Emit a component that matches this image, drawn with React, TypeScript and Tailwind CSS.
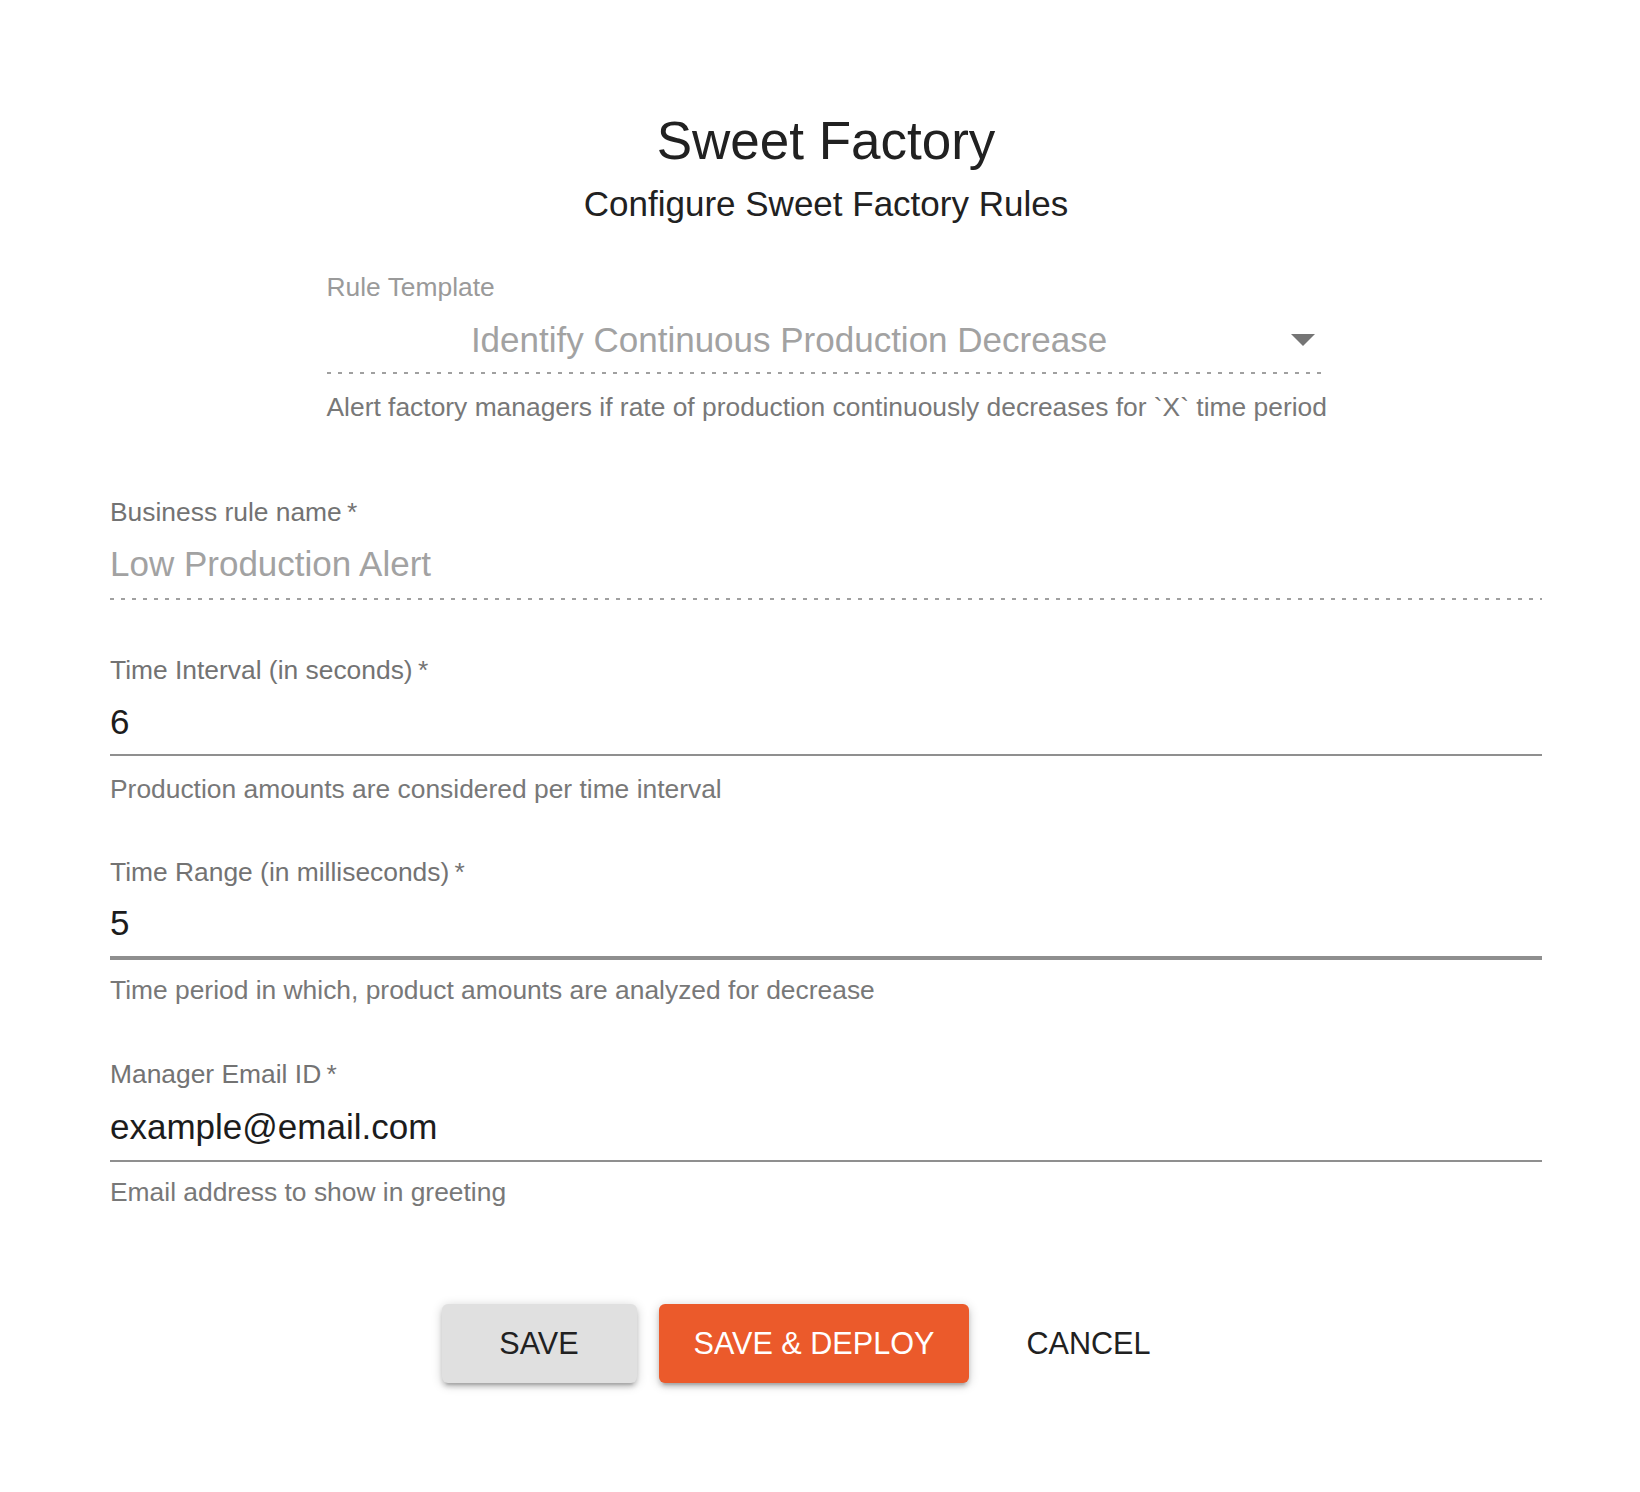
import React from 'react';

// small building blocks for the form fields
const Label: React.FC<{ text: string; required?: boolean; muted?: boolean; className?: string }> = ({
  text,
  required,
  muted,
  className = '',
}) => (
  <label className={`block text-[26.4px] leading-[30px] ${muted ? 'text-[#9a9a9a]' : 'text-[#737373]'} ${className}`}>
    {text}
    {required && '\u2009*'}
  </label>
);

const Value: React.FC<{ text: string; disabled?: boolean; className?: string }> = ({ text, disabled, className = '' }) => (
  <div className={`text-[35px] leading-[44px] ${disabled ? 'text-[#a2a2a2]' : 'text-[#1c1c1c]'} ${className}`}>{text}</div>
);

const Dotted: React.FC<{ className?: string }> = ({ className = '' }) => (
  <div
    className={`h-[2px] bg-[linear-gradient(to_right,#a0a0a0_36%,transparent_0%)] bg-[length:11px_2px] bg-repeat-x ${className}`}
  />
);

const Helper: React.FC<{ text: string; className?: string }> = ({ text, className = '' }) => (
  <p className={`whitespace-nowrap text-[26.4px] leading-[30px] text-[#787878] ${className}`}>{text}</p>
);

const App: React.FC = () => {
  return (
    <div className="min-h-[1492px] bg-white pl-[110px] pr-[98px] pt-[111px] font-['Liberation_Sans',Arial,Helvetica,sans-serif]">
      <h1 className="text-center text-[53px] leading-[60px] text-[#212121]">Sweet Factory</h1>
      <h2 className="mt-[11px] text-center text-[35px] leading-[44px] text-[#212121]">Configure Sweet Factory Rules</h2>

      {/* Rule template select (disabled) */}
      <div className="mx-auto mt-[46px] w-[999px]">
        <Label text="Rule Template" muted />
        <div className="relative mt-[16px]">
          <Value text="Identify Continuous Production Decrease" disabled className="pr-[74px] text-center" />
          <svg
            className="absolute right-[11px] top-1/2 -translate-y-1/2"
            width="24"
            height="12"
            viewBox="0 0 24 12"
          >
            <path d="M0 0 L24 0 L12 12 Z" fill="#757575" />
          </svg>
        </div>
        <Dotted className="mt-[10px]" />
        <Helper
          className="mt-[18px]"
          text="Alert factory managers if rate of production continuously decreases for `X` time period"
        />
      </div>

      {/* Business rule name */}
      <div className="mt-[75px]">
        <Label text="Business rule name" required />
        <Value text="Low Production Alert" disabled className="mt-[15px]" />
        <Dotted className="mt-[12px]" />
      </div>

      {/* Time interval */}
      <div className="mt-[55px]">
        <Label text="Time Interval (in seconds)" required />
        <Value text="6" className="mt-[15px]" />
        <div className="mt-[10px] h-[2px] bg-[#8f8f8f]" />
        <Helper className="mt-[18px]" text="Production amounts are considered per time interval" />
      </div>

      {/* Time range */}
      <div className="mt-[53px]">
        <Label text="Time Range (in milliseconds)" required />
        <Value text="5" className="mt-[14px]" />
        <div className="mt-[11px] h-[4px] bg-[#8f8f8f]" />
        <Helper className="mt-[15px]" text="Time period in which, product amounts are analyzed for decrease" />
      </div>

      {/* Manager email */}
      <div className="mt-[54px]">
        <Label text="Manager Email ID" required />
        <Value text="example@email.com" className="mt-[16px]" />
        <div className="mt-[11px] h-[2px] bg-[#8f8f8f]" />
        <Helper className="mt-[15px]" text="Email address to show in greeting" />
      </div>

      {/* Actions */}
      <div className="mt-[97px] flex items-center justify-center gap-[22px] pr-[25px]">
        <button className="h-[79px] min-w-[195px] rounded-[6px] bg-[#e0e0e0] px-[35px] text-[30.6px] text-[#212121] shadow-[0_2px_11px_0_rgba(0,0,0,0.2),0_4px_4px_0_rgba(0,0,0,0.14),0_6px_2px_-4px_rgba(0,0,0,0.12)]">
          SAVE
        </button>
        <button className="h-[79px] min-w-[193px] rounded-[6px] bg-[#eb5a2b] px-[35px] text-[30.6px] text-white shadow-[0_2px_11px_0_rgba(0,0,0,0.2),0_4px_4px_0_rgba(0,0,0,0.14),0_6px_2px_-4px_rgba(0,0,0,0.12)]">
          SAVE &amp; DEPLOY
        </button>
        <button className="h-[79px] min-w-[193px] rounded-[6px] px-[35px] text-[30.6px] text-[#212121]">
          CANCEL
        </button>
      </div>
    </div>
  );
};

export default App;
